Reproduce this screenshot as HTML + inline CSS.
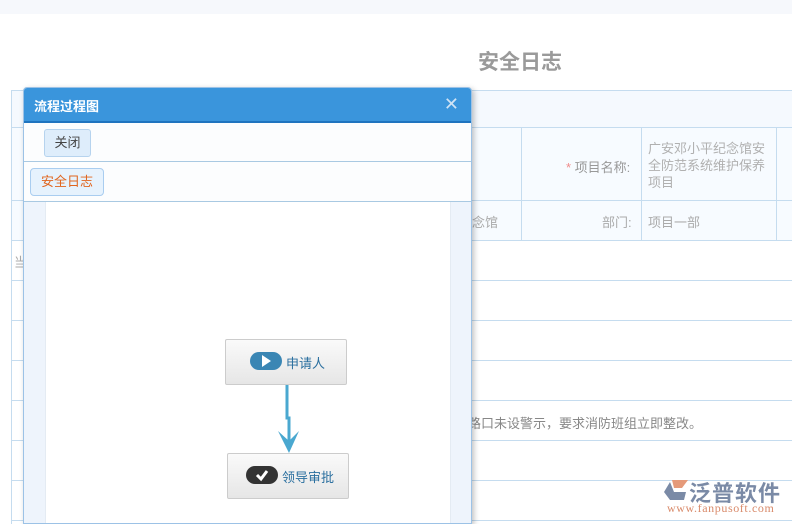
<!DOCTYPE html>
<html><head><meta charset="utf-8"><style>
*{margin:0;padding:0;box-sizing:border-box}
body{width:792px;height:524px;overflow:hidden;background:#fff;font-family:"Liberation Sans","Noto Sans CJK SC",sans-serif;font-size:13px;position:relative}
.a{position:absolute}
.hl{position:absolute;left:11px;right:0;height:1px;background:#c5dcef}
.vl{position:absolute;width:1px;background:#c5dcef}
.t{position:absolute;color:#aaa;font-size:13px}
</style></head><body>
<div class="a" style="left:0;top:0;width:792px;height:14px;background:#f6f8fc"></div>
<div class="t" style="left:478px;top:46px;font-size:21px;font-weight:bold;color:#9a9a9a">安全日志</div>
<div class="a" style="left:11px;top:90px;right:0;height:37px;background:#f5f9fe"></div>
<div class="a" style="left:11px;top:127px;right:0;height:113px;background:#f7fbff"></div>
<div class="hl" style="top:90px"></div><div class="hl" style="top:127px"></div><div class="hl" style="top:200px"></div><div class="hl" style="top:240px"></div><div class="hl" style="top:280px"></div><div class="hl" style="top:320px"></div><div class="hl" style="top:360px"></div><div class="hl" style="top:400px"></div><div class="hl" style="top:440px"></div><div class="hl" style="top:480px"></div><div class="hl" style="top:520px"></div>
<div class="vl" style="left:11px;top:90px;height:434px"></div>
<div class="vl" style="left:521px;top:127px;height:113px"></div>
<div class="vl" style="left:641px;top:127px;height:113px"></div>
<div class="vl" style="left:776px;top:127px;height:113px"></div>
<div class="t" style="left:566px;top:157px;color:#999"><span style="color:#f08a8a">*</span> 项目名称:</div>
<div class="t" style="left:648px;top:140px;line-height:17px;width:125px;color:#b0b0b0">广安邓小平纪念馆安全防范系统维护保养项目</div>
<div class="t" style="left:472px;top:212px">念馆</div>
<div class="t" style="left:602px;top:212px">部门:</div>
<div class="t" style="left:648px;top:212px">项目一部</div>
<div class="t" style="left:14px;top:252px">当</div>
<div class="t" style="left:468px;top:413px;color:#888">路口未设警示，要求消防班组立即整改。</div>
<!-- logo -->
<svg class="a" style="left:662px;top:478px" width="28" height="24"><path d="M10 2 L26 2 L20 10 L12 10 Z" fill="#e59a7a"/><path d="M8 4 L2 14 L8 22 L22 22 L24 14 L12 14 Z" fill="#7a8aa6"/></svg>
<div class="a" style="left:689px;top:476px;font-size:22px;font-weight:bold;color:#7a8aa6;letter-spacing:1px">泛普软件</div>
<div class="a" style="left:667px;top:501px;font-size:12px;font-family:'Liberation Serif',serif;color:#d98a6a;letter-spacing:0.6px">www.fanpusoft.com</div>
<!-- dialog -->
<div class="a" style="left:23px;top:87px;width:449px;height:437px;background:#fff;border:1px solid #9cc2e6;border-radius:4px 4px 0 0;box-shadow:2px 2px 6px rgba(0,0,0,.25)">
 <div style="height:35px;background:#3a95dc;border-bottom:2px solid #1f74bf;border-radius:3px 3px 0 0;color:#fff;font-weight:bold;font-size:13px;padding:8px 10px">流程过程图<span style="position:absolute;right:12px;top:6px;font-size:18px;font-weight:normal;color:#cfe3f5">✕</span></div>
 <div style="height:39px;border-bottom:1px solid #a9c9e2;background:#fcfdfe;position:relative"><div class="a" style="left:20px;top:6px;width:47px;height:28px;background:#deedfb;border:1px solid #b6d3ee;border-radius:3px;color:#444;text-align:center;line-height:26px">关闭</div></div>
 <div style="height:40px;border-bottom:1px solid #a9c9e2;background:#fcfdfe;position:relative"><div class="a" style="left:6px;top:6px;width:74px;height:28px;background:#e6f2fd;border:1px solid #a9cdf0;border-radius:4px;color:#e0651f;text-align:center;line-height:26px">安全日志</div></div>
 <div style="position:absolute;left:0;top:114px;right:0;bottom:0;background:#eef4fc">
  <div class="a" style="left:21px;top:0;width:406px;bottom:0;background:#fff;border-left:1px solid #e4ebf3;border-right:1px solid #e4ebf3"></div>
 </div>
</div>
<!-- flow -->
<div class="a" style="left:225px;top:339px;width:122px;height:46px;border:1px solid #ccc;border-radius:2px;background:linear-gradient(#fafafa,#e6e6e6)"></div>
<div class="a" style="left:250px;top:352px;width:32px;height:18px;border-radius:9px;background:#3a86b4"></div>
<svg class="a" style="left:260px;top:355px" width="12" height="12"><path d="M2 0 L11 6 L2 12Z" fill="#fff"/></svg>
<div class="a" style="left:286px;top:353px;color:#2a6f9f;font-size:13px">申请人</div>
<svg class="a" style="left:275px;top:385px" width="30" height="70"><path d="M12 0 L12 33 L14 33 L14 60" stroke="#4aa8d0" stroke-width="3" fill="none"/><path d="M3 46 L14 68 L24 46 L14 56Z" fill="#4aa8d0"/></svg>
<div class="a" style="left:227px;top:453px;width:122px;height:46px;border:1px solid #ccc;border-radius:2px;background:linear-gradient(#fafafa,#e6e6e6)"></div>
<div class="a" style="left:246px;top:466px;width:32px;height:18px;border-radius:9px;background:#333"></div>
<svg class="a" style="left:255px;top:468px" width="14" height="14"><path d="M2 7 L6 11 L12 3" stroke="#fff" stroke-width="3" fill="none"/></svg>
<div class="a" style="left:282px;top:467px;color:#2a6f9f;font-size:13px">领导审批</div>
</body></html>
